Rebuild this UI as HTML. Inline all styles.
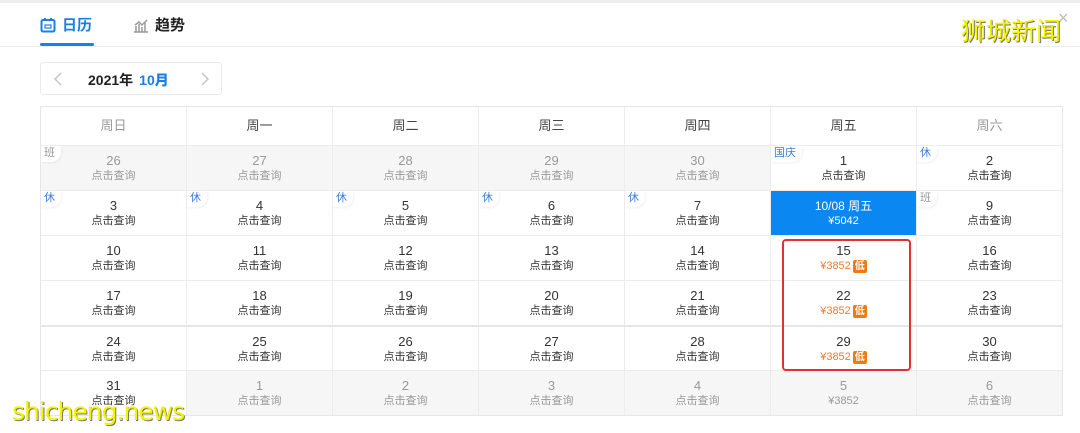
<!DOCTYPE html>
<html><head><meta charset="utf-8"><style>
*{margin:0;padding:0;box-sizing:border-box}
body{width:1080px;height:433px;background:#fff;position:relative;overflow:hidden;font-family:"Liberation Sans","Noto Sans CJK SC",sans-serif;color:#333}
.top{position:absolute;left:0;top:0;width:1080px;height:3px;background:#eee}
.tabline{position:absolute;left:0;top:46px;width:1080px;height:1px;background:#eee}
.tab{position:absolute;top:14px;font-size:15px;font-weight:bold;display:flex;align-items:center;gap:6px}
.ul{position:absolute;left:40px;top:43px;width:54px;height:3px;background:#1a7fe8;border-radius:2px}
.nav{position:absolute;left:40px;top:62px;width:182px;height:33px;border:1px solid #eaeaea;border-radius:3px}
.nav svg{position:absolute;top:9px}
.nav .t{position:absolute;left:47px;top:7px;font-size:14px;font-weight:bold;color:#222}
.nav .t b{color:#1a7fe8;margin-left:6px}
.grid{position:absolute;left:40px;top:106px;width:1023px;border:1px solid #e6e6e6}
.row{display:flex;height:45px;border-top:1px solid #ececec}
.hrow{height:38px;border-top:none}
.c{width:146px;position:relative;text-align:center;border-left:1px solid #ececec}
.c:first-child{border-left:none;width:145px}
.hrow .c{line-height:38px;font-size:13px;color:#444}
.hrow .c.w{color:#999}
.n{display:block;font-size:13px;padding-top:7px;line-height:16px}
.s{display:block;font-size:11px;line-height:15px}
.g{background:#f6f6f6}
.g .n,.g .s{color:#999}
.tg{position:absolute;left:0;top:0;background:#fff;font-size:11px;color:#3b7fd6;padding:1px 6px 2px 3px;border-radius:0 0 10px 0;line-height:13px;box-shadow:1px 1px 2px rgba(0,0,0,.06)}
.tg.b{color:#999}
.sel{background:#0b87f2;color:#fff}
.sel .n,.sel .s{color:#fff}
.p{color:#f07a2e}
.lo{display:inline-block;background:#f07a10;color:#fff;font-size:10px;line-height:13px;padding:0 2px;border-radius:2px;margin-left:2px;font-weight:bold}
.red{position:absolute;left:782px;top:239px;width:129px;height:132px;border:2px solid #e53030;border-radius:4px}
.wm{position:absolute;color:#f7f300;text-shadow:1px 1px 0 #777;font-family:"Noto Sans CJK SC",sans-serif}
</style></head><body>
<div class="top"></div>
<div class="tab" style="left:40px;color:#1a7fe8">
<svg width="16" height="16" viewBox="0 0 16 16"><rect x="1.5" y="3" width="13" height="11.5" rx="1.5" fill="none" stroke="#1a7fe8" stroke-width="2"/><rect x="4" y="1" width="2" height="3" fill="#1a7fe8"/><rect x="10" y="1" width="2" height="3" fill="#1a7fe8"/><rect x="5" y="8" width="6" height="3" fill="none" stroke="#1a7fe8" stroke-width="1.2"/></svg>日历</div>
<div class="tab" style="left:133px;color:#222">
<svg width="16" height="16" viewBox="0 0 16 16"><path d="M1 15h14M3 15V9M6 15V7M9 15V10M12 15V6M2 8l4-3 3 3 5-5" fill="none" stroke="#999" stroke-width="1.5"/></svg>趋势</div>
<div class="ul"></div>
<div class="tabline"></div>
<div class="nav">
<svg style="left:13px" width="8" height="14" viewBox="0 0 8 14"><path d="M7 1L1 7l6 6" fill="none" stroke="#c4c4c4" stroke-width="1.5"/></svg>
<span class="t">2021年<b>10月</b></span>
<svg style="left:160px" width="8" height="14" viewBox="0 0 8 14"><path d="M1 1l6 6-6 6" fill="none" stroke="#c4c4c4" stroke-width="1.5"/></svg></div>
<div class="grid">
<div class="row hrow"><div class="c w">周日</div><div class="c">周一</div><div class="c">周二</div><div class="c">周三</div><div class="c">周四</div><div class="c">周五</div><div class="c w">周六</div></div>
<div class="row">
<div class="c g"><span class="tg b">班</span><span class="n">26</span><span class="s">点击查询</span></div>
<div class="c g"><span class="n">27</span><span class="s">点击查询</span></div>
<div class="c g"><span class="n">28</span><span class="s">点击查询</span></div>
<div class="c g"><span class="n">29</span><span class="s">点击查询</span></div>
<div class="c g"><span class="n">30</span><span class="s">点击查询</span></div>
<div class="c"><span class="tg">国庆</span><span class="n">1</span><span class="s">点击查询</span></div>
<div class="c"><span class="tg">休</span><span class="n">2</span><span class="s">点击查询</span></div></div>
<div class="row">
<div class="c"><span class="tg">休</span><span class="n">3</span><span class="s">点击查询</span></div>
<div class="c"><span class="tg">休</span><span class="n">4</span><span class="s">点击查询</span></div>
<div class="c"><span class="tg">休</span><span class="n">5</span><span class="s">点击查询</span></div>
<div class="c"><span class="tg">休</span><span class="n">6</span><span class="s">点击查询</span></div>
<div class="c"><span class="tg">休</span><span class="n">7</span><span class="s">点击查询</span></div>
<div class="c sel"><span class="n" style="font-size:12px">10/08 周五</span><span class="s">¥5042</span></div>
<div class="c"><span class="tg b">班</span><span class="n">9</span><span class="s">点击查询</span></div></div>
<div class="row">
<div class="c"><span class="n">10</span><span class="s">点击查询</span></div>
<div class="c"><span class="n">11</span><span class="s">点击查询</span></div>
<div class="c"><span class="n">12</span><span class="s">点击查询</span></div>
<div class="c"><span class="n">13</span><span class="s">点击查询</span></div>
<div class="c"><span class="n">14</span><span class="s">点击查询</span></div>
<div class="c"><span class="n">15</span><span class="s p">¥3852<span class="lo">低</span></span></div>
<div class="c"><span class="n">16</span><span class="s">点击查询</span></div></div>
<div class="row">
<div class="c"><span class="n">17</span><span class="s">点击查询</span></div>
<div class="c"><span class="n">18</span><span class="s">点击查询</span></div>
<div class="c"><span class="n">19</span><span class="s">点击查询</span></div>
<div class="c"><span class="n">20</span><span class="s">点击查询</span></div>
<div class="c"><span class="n">21</span><span class="s">点击查询</span></div>
<div class="c"><span class="n">22</span><span class="s p">¥3852<span class="lo">低</span></span></div>
<div class="c"><span class="n">23</span><span class="s">点击查询</span></div></div>
<div class="row" style="border-top:2px solid #e6e6e6;height:45px">
<div class="c"><span class="n">24</span><span class="s">点击查询</span></div>
<div class="c"><span class="n">25</span><span class="s">点击查询</span></div>
<div class="c"><span class="n">26</span><span class="s">点击查询</span></div>
<div class="c"><span class="n">27</span><span class="s">点击查询</span></div>
<div class="c"><span class="n">28</span><span class="s">点击查询</span></div>
<div class="c"><span class="n">29</span><span class="s p">¥3852<span class="lo">低</span></span></div>
<div class="c"><span class="n">30</span><span class="s">点击查询</span></div></div>
<div class="row">
<div class="c"><span class="n">31</span><span class="s">点击查询</span></div>
<div class="c g"><span class="n">1</span><span class="s">点击查询</span></div>
<div class="c g"><span class="n">2</span><span class="s">点击查询</span></div>
<div class="c g"><span class="n">3</span><span class="s">点击查询</span></div>
<div class="c g"><span class="n">4</span><span class="s">点击查询</span></div>
<div class="c g"><span class="n">5</span><span class="s">¥3852</span></div>
<div class="c g"><span class="n">6</span><span class="s">点击查询</span></div></div>
</div>
<div class="red"></div>
<div style="position:absolute;left:1058px;top:8px;color:#bbb;font-size:18px">×</div>
<div class="wm" style="left:961px;top:14px;font-size:25px;line-height:32px">狮城新闻</div>
<div class="wm" style="left:12px;top:395px;font-size:25px;line-height:34px;font-family:'DejaVu Sans',sans-serif;font-weight:normal;letter-spacing:-1px">shicheng.news</div>
</body></html>
